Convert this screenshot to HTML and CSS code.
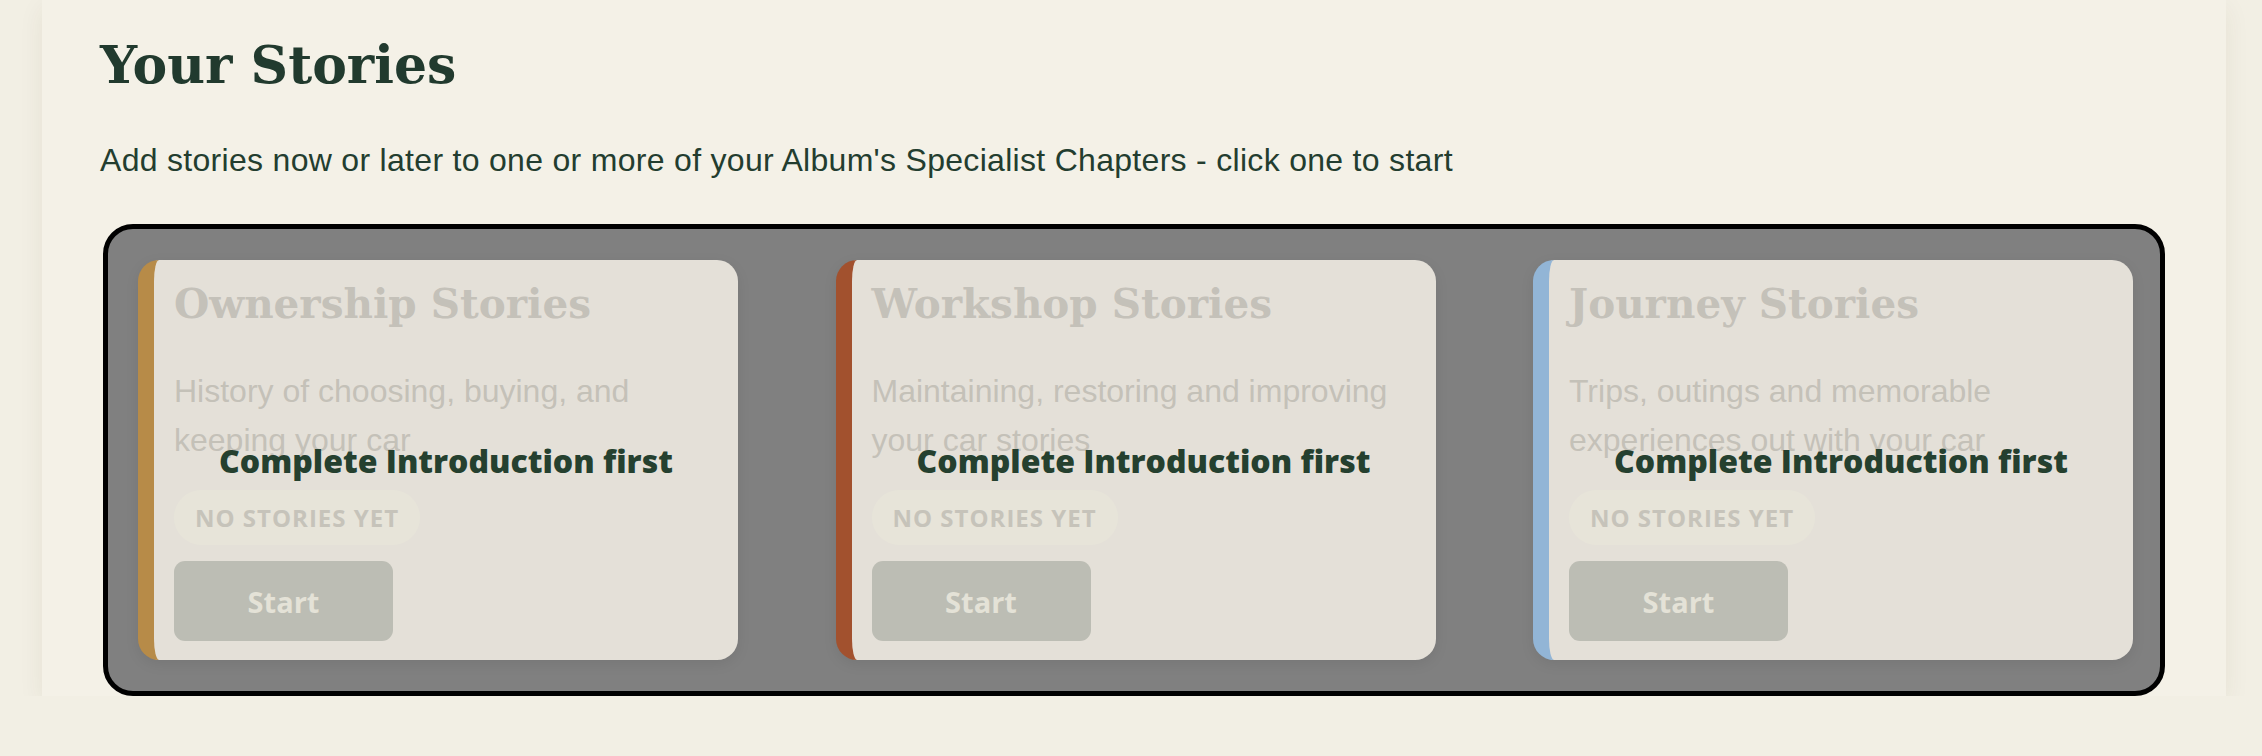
FILE: index.html
```html
<!DOCTYPE html>
<html lang="en">
<head>
    <meta charset="UTF-8">
    <meta name="viewport" content="width=device-width, initial-scale=1.0">
    <title>Your Stories</title>
    <link rel="stylesheet" href="styles.css">
</head>
<body>

<div class="stories-panel">
    <h2 class="stories-title">Your Stories</h2>
    <p class="stories-intro">Add stories now or later to one or more of your Album's Specialist Chapters - click one to start</p>

    <!-- chapters stay locked until the introduction is done -->
    <div class="chapters locked">
        <div class="chapter-card ownership">
            <h3 class="chapter-name">Ownership Stories</h3>
            <p class="chapter-desc">History of choosing, buying, and keeping your car</p>
            <span class="chapter-count">No stories yet</span>
            <button class="chapter-start">Start</button>
            <div class="chapter-lock">Complete Introduction first</div>
        </div>

        <div class="chapter-card workshop">
            <h3 class="chapter-name">Workshop Stories</h3>
            <p class="chapter-desc">Maintaining, restoring and improving your car stories</p>
            <span class="chapter-count">No stories yet</span>
            <button class="chapter-start">Start</button>
            <div class="chapter-lock">Complete Introduction first</div>
        </div>

        <div class="chapter-card journey">
            <h3 class="chapter-name">Journey Stories</h3>
            <p class="chapter-desc">Trips, outings and memorable experiences out with your car</p>
            <span class="chapter-count">No stories yet</span>
            <button class="chapter-start">Start</button>
            <div class="chapter-lock">Complete Introduction first</div>
        </div>
    </div>
</div>

</body>
</html>
```

FILE: styles.css
```css
body {
    margin: 0;
    background-color: #f2efe4;
    font-family: "Liberation Sans", Arial, sans-serif;
    color: #233d2f;
}

.stories-panel {
    width: 2184px;
    margin-left: 42px;
    padding: 35px 58px 0;
    box-sizing: border-box;
    background: #f4f1e7;
    box-shadow: 0 8px 24px rgba(70, 60, 20, 0.07);
}

.stories-title {
    margin: 0;
    font-family: "DejaVu Serif", Georgia, serif;
    font-size: 52px;
    line-height: 60px;
    font-weight: bold;
    color: #213a2e;
}

.stories-intro {
    margin: 44px 0 0;
    font-size: 32px;
    line-height: 42px;
    letter-spacing: 0.3px;
}

/* locked grid of chapters */
.chapters {
    display: grid;
    grid-template-columns: repeat(3, 600px);
    justify-content: space-between;
    margin: 43px 3px 0;
    padding: 31px 27px 31px 30px;
    border-radius: 30px;
}

.chapters.locked {
    background: #808080;
    border: 5px solid #000;
}

.chapter-card {
    position: relative;
    padding: 20px 20px 19px;
    background: #e4e0d8;
    border-left: 16px solid #b78b48;
    border-radius: 21px;
    box-shadow: 0 4px 14px rgba(0, 0, 0, 0.08);
}

.chapter-card.workshop {
    border-left-color: #a2512e;
}

.chapter-card.journey {
    border-left-color: #92b5d6;
}

.chapter-name {
    margin: 0 0 39px;
    font-family: "DejaVu Serif", Georgia, serif;
    font-size: 40.5px;
    line-height: 48px;
    font-weight: bold;
    color: #c4c1b9;
}

.chapter-desc {
    margin: 0;
    font-size: 32px;
    line-height: 49px;
    color: #c4c1b8;
}

.chapter-count {
    display: inline-block;
    margin-top: 25px;
    padding: 0 21px;
    height: 55px;
    line-height: 55px;
    border-radius: 28px;
    background: #e7e4d9;
    font-family: "Open Sans", sans-serif;
    font-size: 24px;
    font-weight: bold;
    letter-spacing: 1px;
    text-transform: uppercase;
    color: #c6c3ba;
}

.chapter-start {
    display: block;
    width: 219px;
    height: 80px;
    margin-top: 16px;
    border: none;
    border-radius: 11px;
    background: #bcbdb4;
    font-family: "Open Sans", sans-serif;
    font-size: 29px;
    font-weight: bold;
    color: #e4e2d7;
}

.chapter-lock {
    position: absolute;
    inset: 0;
    display: flex;
    align-items: center;
    justify-content: center;
    font-family: "Open Sans", sans-serif;
    font-size: 32px;
    font-weight: 800;
    color: #25402f;
}
```
